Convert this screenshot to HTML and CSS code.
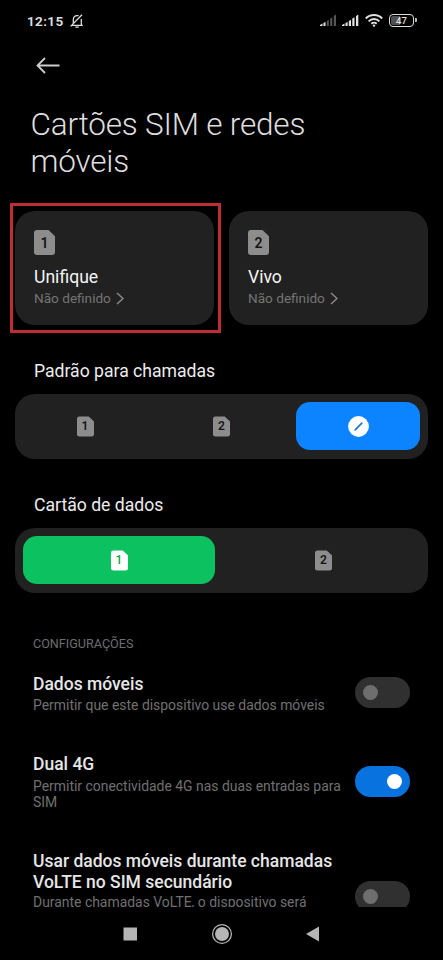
FILE: index.html
```html
<!DOCTYPE html>
<html lang="pt-BR">
<head>
<meta charset="utf-8">
<meta name="viewport" content="width=device-width, initial-scale=1">
<title>Cartões SIM e redes móveis</title>
<link rel="stylesheet" href="styles.css">
</head>
<body>
<svg class="defs" aria-hidden="true">
  <symbol id="sim" viewBox="0 0 21 25"><path d="M3 0H14.5L21 6.2V22a3 3 0 0 1-3 3H3a3 3 0 0 1-3-3V3a3 3 0 0 1 3-3Z"/></symbol>
  <symbol id="chevron" viewBox="0 0 8 13"><path d="M1 1 7 6.5 1 12" fill="none" stroke="currentColor" stroke-width="1.5"/></symbol>
</svg>
<div class="phone">
  <div class="status">
    <span class="clock">12:15</span>
    <svg class="bell" viewBox="0 0 14 14" fill="none" stroke="currentColor" stroke-width="1.25"><path d="M2.2 11.3H12.8M3.3 9.5V6C3.3 3.2 4.8 1.5 7.2 1.5h1.4M11.3 5v6.2M5.4 13H8.8M.6 12.4 12 .8"/></svg>
    <svg class="signal" viewBox="0 0 17 13"><path class="lit" d="M0 12v-1l2.5-1.5V12ZM3.5 12V9l2-1v4Z"/><path class="dim" d="M6.8 12V7l2-1.3V12ZM10.2 12V4.5l2.1-1.3V12ZM13.8 12V2L16 .5V12Z"/></svg>
    <svg class="signal second" viewBox="0 0 17 13"><path class="lit" d="M0 12v-1l2.5-1.5V12ZM3.5 12V9l2.1-1v4ZM6.8 12V7l2.2-1.3V12ZM10.3 12V4.5l2.2-1.3V12ZM14 12V2l2.3-1.5V12Z"/></svg>
    <svg class="wifi" viewBox="0 0 18 13" fill="none" stroke="currentColor" stroke-width="1.9"><path d="M.8 4.5C5.3-.1 12.7-.1 17.2 4.5M3.6 7.3c3-3 7.8-3 10.8 0M6.3 9.8c1.5-1.4 3.9-1.4 5.4 0"/><circle cx="9" cy="11.6" r="1.2" fill="currentColor" stroke="none"/></svg>
    <span class="battery"><span>47</span></span>
  </div>
  <div class="toolbar">
    <svg class="back" viewBox="0 0 24 17" fill="none" stroke="currentColor" stroke-width="1.8"><path d="M23.5 8.5H1.5M9 1 1.5 8.5 9 16"/></svg>
  </div>
  <h1>Cartões SIM e redes<br>móveis</h1>
  <div class="cards">
    <div class="card marked">
      <span class="sim large"><svg><use href="#sim"/></svg><b>1</b></span>
      <div class="carrier">Unifique</div>
      <div class="number">Não definido<svg><use href="#chevron"/></svg></div>
    </div>
    <div class="card">
      <span class="sim large"><svg><use href="#sim"/></svg><b>2</b></span>
      <div class="carrier">Vivo</div>
      <div class="number">Não definido<svg><use href="#chevron"/></svg></div>
    </div>
  </div>
  <h2>Padrão para chamadas</h2>
  <div class="segments three">
    <div class="segment"><span class="sim"><svg><use href="#sim"/></svg><b>1</b></span></div>
    <div class="segment"><span class="sim"><svg><use href="#sim"/></svg><b>2</b></span></div>
    <div class="segment blue"><svg class="none" viewBox="0 0 21 21"><circle cx="10.5" cy="10.5" r="10.4" fill="#fff"/><path d="m7.2 13.8 6.6-6.6" stroke="#2874c8" stroke-width="1.7" stroke-linecap="round"/></svg></div>
  </div>
  <h2>Cartão de dados</h2>
  <div class="segments two">
    <div class="segment green"><span class="sim white"><svg><use href="#sim"/></svg><b>1</b></span></div>
    <div class="segment"><span class="sim"><svg><use href="#sim"/></svg><b>2</b></span></div>
  </div>
  <div class="settings">
    <h3>CONFIGURAÇÕES</h3>
    <div class="row first">
      <div class="copy"><div class="name">Dados móveis</div><div class="desc">Permitir que este dispositivo use dados móveis</div></div>
      <span class="toggle"></span>
    </div>
    <div class="row second-row">
      <div class="copy"><div class="name">Dual 4G</div><div class="desc">Permitir conectividade 4G nas duas entradas para<br>SIM</div></div>
      <span class="toggle on"></span>
    </div>
    <div class="row third">
      <div class="copy"><div class="name">Usar dados móveis durante chamadas<br>VoLTE no SIM secundário</div><div class="desc">Durante chamadas VoLTE, o dispositivo será</div></div>
      <span class="toggle"></span>
    </div>
  </div>
  <div class="navbar">
    <svg viewBox="0 0 24 24"><rect x="4.5" y="5.5" width="13.5" height="13"/></svg>
    <svg viewBox="0 0 24 24"><circle cx="12" cy="12" r="7"/><circle cx="12" cy="12" r="9.4" fill="none" stroke="currentColor" stroke-width="1.3"/></svg>
    <svg viewBox="0 0 24 24"><path d="M18 4.5v15L5 12Z"/></svg>
  </div>
</div>
</body>
</html>
```
FILE: styles.css
```css
* { box-sizing: border-box; }
body { margin: 0; background: #000; color: #ececec; font-family: Roboto, "Liberation Sans", sans-serif; }
.defs { position: absolute; width: 0; height: 0; }
.phone { width: 443px; height: 960px; display: flex; flex-direction: column; overflow: hidden; background: #000; }
.phone > * { flex-shrink: 0; }
svg { display: block; }

.status { height: 40px; padding: 1px 26px 0 27px; display: flex; align-items: center; color: #e0e0e0; }
.clock { font-size: 13.5px; font-weight: 600; letter-spacing: .4px; width: 43px; }
.bell { width: 14px; height: 14px; margin-right: auto; }
.signal { width: 17px; height: 13px; margin-right: 5px; }
.signal.second { margin-right: 6px; }
.lit { fill: #e4e4e4; }
.dim { fill: #555; }
.wifi { width: 18px; height: 13px; margin-right: 6px; }
.battery { position: relative; width: 25px; height: 13px; margin-right: 3px; border: 1.5px solid #ddd; border-radius: 4px; padding: 1px; }
.battery span { display: block; height: 100%; font-size: 9.5px; line-height: 10px; font-weight: 500; text-align: center; background: linear-gradient(90deg, #505050 42%, transparent 42%); border-radius: 2px; }
.battery::after { content: ""; position: absolute; right: -4px; top: 3px; width: 2px; height: 4px; background: #bbb; border-radius: 0 1px 1px 0; }

.toolbar { height: 65px; padding: 17px 0 0 36px; color: #ccc; }
.back { width: 24px; height: 17px; }
h1 { margin: 0; height: 106px; padding: 1px 0 0 30.5px; font-size: 31.5px; line-height: 37px; font-weight: 300; letter-spacing: -.2px; color: #dedede; }

.cards { display: grid; grid-template-columns: 199px 199px; gap: 15px; padding-left: 15px; height: 114px; }
.card { position: relative; padding: 19px 0 0 19px; border-radius: 20px; background: #212121; }
.marked::after { content: ""; position: absolute; inset: -8px -7px -8px -5px; border: 3px solid #be2d35; }
.sim { position: relative; display: flex; align-items: center; justify-content: center; width: 17px; height: 21px; color: #151515; }
.sim svg { position: absolute; inset: 0; width: 100%; height: 100%; fill: #8d8d8d; }
.sim b { position: relative; font-size: 12px; line-height: 1; font-weight: 600; }
.sim.large { width: 21px; height: 25px; }
.sim.large b { font-size: 14px; }
.sim.white { color: #0aa552; }
.sim.white svg { fill: #fff; }
.sim.white b { font-weight: 500; }
.carrier { margin-top: 11px; font-size: 17.6px; line-height: 22px; color: #f4f4f4; }
.number { display: flex; align-items: center; margin-top: 1px; font-size: 13.6px; line-height: 18px; color: #747474; }
.number svg { width: 8px; height: 13px; margin-left: 5px; color: #8a8a8a; }

h2 { margin: 0; height: 69px; padding: 35px 0 0 34px; font-size: 17.6px; line-height: 22px; font-weight: 400; color: #ededed; }
.segments { display: grid; margin-left: 15px; width: 413px; height: 65px; padding: 8px; border-radius: 20px; background: #212121; }
.three { grid-template-columns: repeat(3, 124px); column-gap: 12.5px; }
.two { grid-template-columns: 192px 193px; column-gap: 12px; }
.segment { height: 48px; display: flex; align-items: center; justify-content: center; border-radius: 14px; }
.blue { background: #0d84ff; }
.green { background: #0bc160; }
.none { width: 21px; height: 21px; }

.settings { height: 314px; overflow: hidden; padding: 42px 33px 0; }
h3 { margin: 0 0 20px; font-size: 12.6px; line-height: 18px; font-weight: 400; color: #6e6e6e; }
.row { display: flex; justify-content: space-between; align-items: flex-start; }
.copy { padding-top: 1px; white-space: nowrap; }
.name { font-size: 17.5px; line-height: 21px; font-weight: 500; color: #e6e6e6; }
.desc { font-size: 13.93px; line-height: 16px; color: #707070; margin-top: 2px; }
.first { height: 80px; }
.second-row { height: 97px; }
.second-row .desc { margin-top: 3px; }
.third .desc { margin-top: 1px; }
.toggle { width: 55px; height: 31px; margin-top: 4px; padding: 8px; border-radius: 16px; background: #303030; display: flex; }
.toggle::before { content: ""; width: 15px; height: 15px; border-radius: 50%; background: #6e6e6e; }
.on { background: #0873de; justify-content: flex-end; margin-top: 13px; }
.on::before { background: #fff; }
.third .toggle { margin-top: 31px; }

.navbar { height: 53px; display: flex; justify-content: center; gap: 67px; padding-top: 14.5px; color: #b5b5b5; fill: #b5b5b5; }
.navbar svg { width: 24px; height: 24px; }
```
